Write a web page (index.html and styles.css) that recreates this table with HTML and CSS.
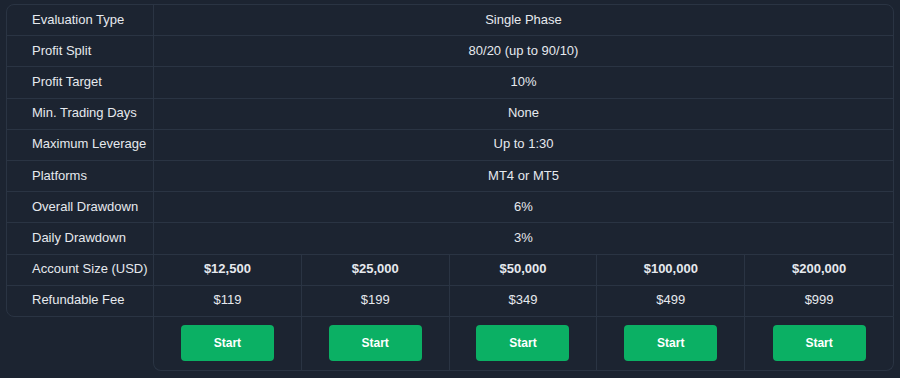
FILE: index.html
```html
<!DOCTYPE html>
<html lang="en">
<head>
<meta charset="utf-8">
<title>Evaluation</title>
<link rel="stylesheet" href="styles.css">
</head>
<body>
<div class="wrap">
  <div class="table">
    <div class="row merged"><div class="label">Evaluation Type</div><div class="val">Single Phase</div></div>
    <div class="row merged"><div class="label">Profit Split</div><div class="val">80/20 (up to 90/10)</div></div>
    <div class="row merged"><div class="label">Profit Target</div><div class="val">10%</div></div>
    <div class="row merged"><div class="label">Min. Trading Days</div><div class="val">None</div></div>
    <div class="row merged"><div class="label">Maximum Leverage</div><div class="val">Up to 1:30</div></div>
    <div class="row merged"><div class="label">Platforms</div><div class="val">MT4 or MT5</div></div>
    <div class="row merged"><div class="label">Overall Drawdown</div><div class="val">6%</div></div>
    <div class="row merged"><div class="label">Daily Drawdown</div><div class="val">3%</div></div>
    <div class="row split">
      <div class="label">Account Size (USD)</div>
      <div class="val bold">$12,500</div>
      <div class="val bold">$25,000</div>
      <div class="val bold">$50,000</div>
      <div class="val bold">$100,000</div>
      <div class="val bold">$200,000</div>
    </div>
    <div class="row split">
      <div class="label">Refundable Fee</div>
      <div class="val">$119</div>
      <div class="val">$199</div>
      <div class="val">$349</div>
      <div class="val">$499</div>
      <div class="val">$999</div>
    </div>
  </div>
  <div class="actions">
    <div class="cell"><button class="btn">Start</button></div>
    <div class="cell"><button class="btn">Start</button></div>
    <div class="cell"><button class="btn">Start</button></div>
    <div class="cell"><button class="btn">Start</button></div>
    <div class="cell"><button class="btn">Start</button></div>
  </div>
</div>
</body>
</html>
```
FILE: styles.css
```css
html, body {
  margin: 0;
  padding: 0;
  background: #1c2431;
}
body {
  font-family: "Liberation Sans", Arial, sans-serif;
  font-size: 13px;
  color: #e6e9ee;
}
.wrap {
  padding: 4px 6px 0 6px;
  width: 888px;
}
.table {
  border: 1px solid #2a3443;
  border-radius: 8px 8px 0 8px;
}
.row {
  display: grid;
  height: 30.2px;
  border-bottom: 1px solid #2a3443;
}
.row:last-child {
  border-bottom: none;
}
.row.merged {
  grid-template-columns: 147px 1fr;
}
.row.split {
  grid-template-columns: 147px repeat(5, 1fr);
}
.label {
  display: flex;
  align-items: center;
  padding-left: 25px;
  padding-bottom: 2px;
  border-right: 1px solid #2a3443;
}
.val {
  display: flex;
  align-items: center;
  justify-content: center;
  padding-bottom: 2px;
  border-right: 1px solid #2a3443;
}
.val:last-child {
  border-right: none;
}
.bold {
  font-weight: bold;
}
.actions {
  margin-left: 147px;
  display: grid;
  grid-template-columns: repeat(5, 1fr);
  border: 1px solid #2a3443;
  border-top: none;
  border-radius: 0 0 8px 8px;
  height: 53px;
}
.cell {
  display: flex;
  align-items: center;
  justify-content: center;
  border-right: 1px solid #2a3443;
}
.cell:last-child {
  border-right: none;
}
.btn {
  width: 93px;
  height: 36px;
  border: none;
  border-radius: 4px;
  background: #0bb064;
  color: #ffffff;
  font-family: "Liberation Sans", Arial, sans-serif;
  font-size: 12px;
  font-weight: bold;
  cursor: pointer;
}
```
